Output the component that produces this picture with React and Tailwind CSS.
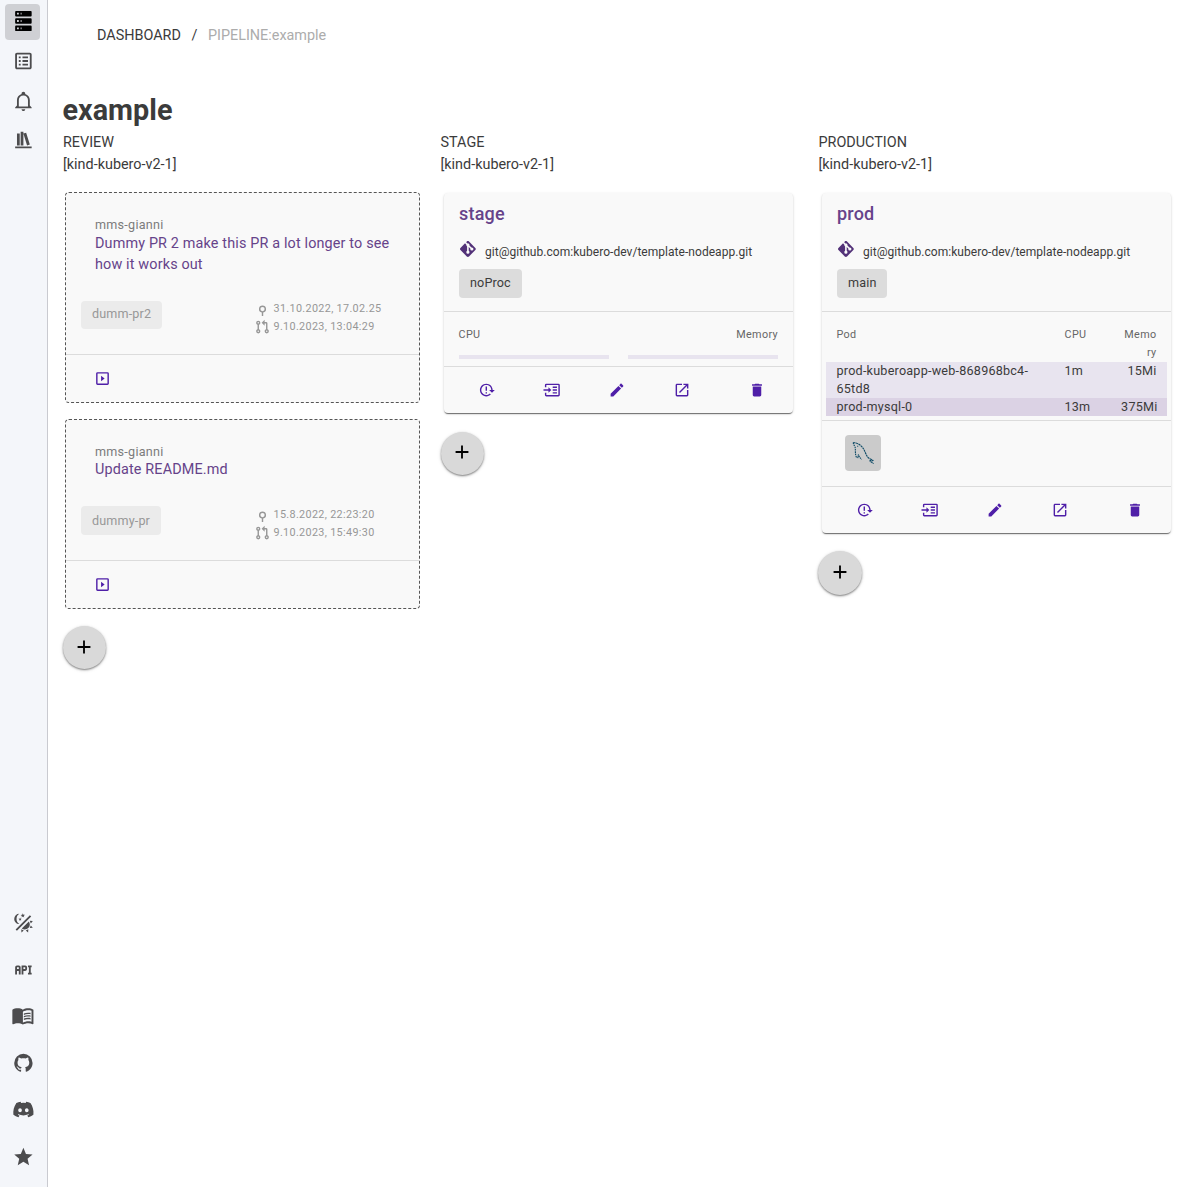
import React from "react";
import { MdMenuBook } from "react-icons/md";
import { FaDiscord } from "react-icons/fa";

const paths = {
  server:
    "M4,1H20A1,1 0 0,1 21,2V6A1,1 0 0,1 20,7H4A1,1 0 0,1 3,6V2A1,1 0 0,1 4,1M4,9H20A1,1 0 0,1 21,10V14A1,1 0 0,1 20,15H4A1,1 0 0,1 3,14V10A1,1 0 0,1 4,9M4,17H20A1,1 0 0,1 21,18V22A1,1 0 0,1 20,23H4A1,1 0 0,1 3,22V18A1,1 0 0,1 4,17M9,5H10V3H9V5M9,13H10V11H9V13M9,21H10V19H9V21M5,3V5H7V3H5M5,11V13H7V11H5M5,19V21H7V19H5Z",
  list: "M11 15H17V17H11V15M9 7H7V9H9V7M11 13H17V11H11V13M11 9H17V7H11V9M9 11H7V13H9V11M21 5V19C21 20.1 20.1 21 19 21H5C3.9 21 3 20.1 3 19V5C3 3.9 3.9 3 5 3H19C20.1 3 21 3.9 21 5M19 5H5V19H19V5M9 15H7V17H9V15Z",
  bell: "M10 21H14C14 22.1 13.1 23 12 23S10 22.1 10 21M21 19V20H3V19L5 17V11C5 7.9 7 5.2 10 4.3V4C10 2.9 10.9 2 12 2S14 2.9 14 4V4.3C17 5.2 19 7.9 19 11V17L21 19M17 11C17 8.2 14.8 6 12 6S7 8.2 7 11V18H17V11Z",
  shelf: "M9 3V18H12V3H9M12 5L16 18L19 17L15 4L12 5M5 5V18H8V5H5M3 19V21H21V19H3Z",
  theme:
    "M7.5,2C5.71,3.15 4.5,5.18 4.5,7.5C4.5,9.82 5.71,11.85 7.53,13C4.46,13 2,10.54 2,7.5A5.5,5.5 0 0,1 7.5,2M19.07,3.5L20.5,4.93L4.93,20.5L3.5,19.07L19.07,3.5M12.89,5.93L11.41,5L9.97,6L10.39,4.3L9,3.24L10.75,3.12L11.33,1.47L12,3.1L13.73,3.13L12.38,4.26L12.89,5.93M9.59,9.54L8.43,8.81L7.31,9.59L7.65,8.27L6.56,7.44L7.92,7.35L8.37,6.06L8.88,7.33L10.24,7.36L9.19,8.23L9.59,9.54M19,13.5A5.5,5.5 0 0,1 13.5,19C12.28,19 11.15,18.6 10.24,17.93L17.93,10.24C18.6,11.15 19,12.28 19,13.5M14.6,20.08L17.37,18.93L17.13,22.28L14.6,20.08M18.93,17.38L20.08,14.61L22.28,17.15L18.93,17.38M20.08,12.42L18.94,9.64L22.28,9.88L20.08,12.42M9.63,18.93L12.4,20.08L9.87,22.27L9.63,18.93Z",
  api: "M7 7H5A2 2 0 0 0 3 9V17H5V13H7V17H9V9A2 2 0 0 0 7 7M7 11H5V9H7M14 7H10V17H12V13H14A2 2 0 0 0 16 11V9A2 2 0 0 0 14 7M14 11H12V9H14M20 9V15H21V17H17V15H18V9H17V7H21V9Z",
  github:
    "M12,2A10,10 0 0,0 2,12C2,16.42 4.87,20.17 8.84,21.5C9.34,21.58 9.5,21.27 9.5,21C9.5,20.77 9.5,20.14 9.5,19.31C6.73,19.91 6.14,17.97 6.14,17.97C5.68,16.81 5.03,16.5 5.03,16.5C4.12,15.88 5.1,15.9 5.1,15.9C6.1,15.97 6.63,16.93 6.63,16.93C7.5,18.45 8.97,18 9.54,17.76C9.63,17.11 9.89,16.67 10.17,16.42C7.95,16.17 5.62,15.31 5.62,11.5C5.62,10.39 6,9.5 6.65,8.79C6.55,8.54 6.2,7.5 6.75,6.15C6.75,6.15 7.59,5.88 9.5,7.17C10.29,6.95 11.15,6.84 12,6.84C12.85,6.84 13.71,6.95 14.5,7.17C16.41,5.88 17.25,6.15 17.25,6.15C17.8,7.5 17.45,8.54 17.35,8.79C18,9.5 18.38,10.39 18.38,11.5C18.38,15.32 16.04,16.16 13.81,16.41C14.17,16.72 14.5,17.33 14.5,18.26C14.5,19.6 14.5,20.68 14.5,21C14.5,21.27 14.66,21.59 15.17,21.5C19.14,20.16 22,16.42 22,12A10,10 0 0,0 12,2Z",
  star: "M12,17.27L18.18,21L16.54,13.97L22,9.24L14.81,8.62L12,2L9.19,8.62L2,9.24L7.45,13.97L5.82,21L12,17.27Z",
  plus: "M19,13H13V19H11V13H5V11H11V5H13V11H19V13Z",
  git: "M2.6,10.59L8.38,4.8L10.07,6.5C9.83,7.35 10.22,8.28 11,8.73V14.27C10.4,14.61 10,15.26 10,16A2,2 0 0,0 12,18A2,2 0 0,0 14,16C14,15.26 13.6,14.61 13,14.27V9.41L15.07,11.5C15,11.65 15,11.82 15,12A2,2 0 0,0 17,14A2,2 0 0,0 19,12A2,2 0 0,0 17,10C16.82,10 16.65,10 16.5,10.07L13.93,7.5C14.19,6.57 13.71,5.55 12.78,5.16C12.35,5 11.9,4.96 11.5,5.07L9.8,3.38L10.59,2.6C11.37,1.81 12.63,1.81 13.41,2.6L21.4,10.59C22.19,11.37 22.19,12.63 21.4,13.41L13.41,21.4C12.63,22.19 11.37,22.19 10.59,21.4L2.6,13.41C1.81,12.63 1.81,11.37 2.6,10.59Z",
  playBox: "M19,19H5V5H19M19,3H5A2,2 0 0,0 3,5V19A2,2 0 0,0 5,21H19A2,2 0 0,0 21,19V5A2,2 0 0,0 19,3M10,8V16L15,12",
  commit: "M12 7A5 5 0 0 0 11 16.9V22H13V16.9A5 5 0 0 0 12 7M12 9A3 3 0 1 1 12 15A3 3 0 1 1 12 9Z",
  pull: "M6,3A3,3 0 0,1 9,6C9,7.31 8.17,8.42 7,8.83V15.17C8.17,15.58 9,16.69 9,18A3,3 0 0,1 6,21A3,3 0 0,1 3,18C3,16.69 3.83,15.58 5,15.17V8.83C3.83,8.42 3,7.31 3,6A3,3 0 0,1 6,3M6,5A1,1 0 0,0 5,6A1,1 0 0,0 6,7A1,1 0 0,0 7,6A1,1 0 0,0 6,5M6,17A1,1 0 0,0 5,18A1,1 0 0,0 6,19A1,1 0 0,0 7,18A1,1 0 0,0 6,17M21,18A3,3 0 0,1 18,21A3,3 0 0,1 15,18C15,16.69 15.83,15.58 17,15.17V7H15V10.25L10.75,6L15,1.75V5H17A2,2 0 0,1 19,7V15.17C20.17,15.58 21,16.69 21,18M18,17A1,1 0 0,0 17,18A1,1 0 0,0 18,19A1,1 0 0,0 19,18A1,1 0 0,0 18,17Z",
  reload:
    "M2 12C2 16.97 6.03 21 11 21C13.39 21 15.68 20.06 17.4 18.4L15.9 16.9C14.63 18.25 12.86 19 11 19C4.76 19 1.64 11.46 6.05 7.05C10.46 2.64 18 5.77 18 12H15L19 16H19.1L23 12H20C20 7.03 15.97 3 11 3C6.03 3 2 7.03 2 12M10 15H12V17H10V15M10 7H12V13H10V7",
  enter:
    "M4 3H21A2 2 0 0 1 23 5V19A2 2 0 0 1 21 21H4A2 2 0 0 1 2 19V16H4V19H21V5H4V8H2V5A2 2 0 0 1 4 3M0 11H7V8L11 12L7 16V13H0V11M13 7H19V9H13V7M13 11H19V13H13V11M13 15H19V17H13V15Z",
  pencil:
    "M20.71,7.04C21.1,6.65 21.1,6 20.71,5.63L18.37,3.29C18,2.9 17.35,2.9 16.96,3.29L15.12,5.12L18.87,8.87M3,17.25V21H6.75L17.81,9.93L14.06,6.18L3,17.25Z",
  open: "M14,3V5H17.59L7.76,14.83L9.17,16.24L19,6.41V10H21V3M19,19H5V5H12V3H5C3.89,3 3,3.9 3,5V19A2,2 0 0,0 5,21H19A2,2 0 0,0 21,19V12H19V19Z",
  trash: "M19,4H15.5L14.5,3H9.5L8.5,4H5V6H19M6,19A2,2 0 0,0 8,21H16A2,2 0 0,0 18,19V7H6V19Z",
};

function Icon({ name, className = "size-[22px]" }) {
  return (
    <svg viewBox="0 0 24 24" className={`shrink-0 overflow-visible fill-current ${className}`}>
      <path fillRule="evenodd" d={paths[name]} />
    </svg>
  );
}

function Sidebar() {
  return (
    <nav className="flex h-[1187px] w-12 shrink-0 flex-col items-center border-r border-[#c9cad0] bg-[#f4f6fa] text-[#4c4c4e] [&_svg]:-translate-x-[0.6px]">
      <div className="mt-1 mr-0.5 flex h-9 w-[35px] items-center justify-center rounded bg-[#cfd0d4] pb-0.5 pl-[2px] text-black">
        <Icon name="server" />
      </div>
      <Icon name="list" className="mt-[10px] size-[22px]" />
      <Icon name="bell" className="mt-[18px] size-[22px]" />
      <Icon name="shelf" className="mt-[17px] size-[22px]" />
      <div className="mt-auto flex flex-col items-center">
        <Icon name="theme" />
        <Icon name="api" className="mt-[25px] size-[22px]" />
        <MdMenuBook className="mt-[23px] size-[23px]" />
        <Icon name="github" className="mt-[25px] size-[22px]" />
        <FaDiscord className="mt-6 h-[23px] w-[22px]" />
        <Icon name="star" className="mt-[25px] mb-[19px] size-[22px]" />
      </div>
    </nav>
  );
}

function AddButton({ className }) {
  return (
    <button
      className={`flex items-center justify-center rounded-full bg-[#d9d9d9] text-black shadow-[0_1px_2px_rgba(0,0,0,0.45),0_1px_4px_rgba(0,0,0,0.12)] ${className}`}
    >
      <Icon name="plus" />
    </button>
  );
}

function ColumnHead({ title }) {
  return (
    <div className="h-[60px] text-[14.4px] leading-[22px]">
      <div>{title}</div>
      <div>[kind-kubero-v2-1]</div>
    </div>
  );
}

function ReviewCard({ title, branch, commit, pull, className, titleClass, chipClass, timesClass }) {
  return (
    <article className={`ml-0.5 flex w-[355px] flex-col rounded border border-dashed border-[#555] bg-[#f9f9f9] ${className}`}>
      <div className="pt-[23px] pr-5 pl-[29px]">
        <div className="text-[12.6px] leading-[18px] tracking-[0.26px] text-[#7c7c7c]">mms-gianni</div>
        <div className={`text-[14.4px] leading-[21px] tracking-[0.15px] text-[#66438a] ${titleClass}`}>{title}</div>
      </div>
      <div className="mt-auto mb-[25px] flex items-start pl-[15px]">
        <div className={`flex items-center rounded bg-[#ebebeb] px-[11px] text-[12.6px] tracking-[0.14px] text-[#989898] ${chipClass}`}>
          {branch}
        </div>
        <div className={`mr-[37.5px] ml-auto w-32 text-[10.8px] leading-[18px] tracking-[0.34px] text-[#979797] [&_svg]:-translate-y-[0.5px] ${timesClass}`}>
          <div className="flex h-[18px] items-center gap-[3px] whitespace-nowrap">
            <Icon name="commit" className="size-[17px]" />
            {commit}
          </div>
          <div className="-mb-2 flex h-[18px] items-center gap-[3px] whitespace-nowrap">
            <Icon name="pull" className="size-[17px]" />
            {pull}
          </div>
        </div>
      </div>
      <div className="flex h-12 items-center border-t border-[#dcdcdc] pl-7 text-[#4f1fa8]">
        <Icon name="playBox" className="size-[17px]" />
      </div>
    </article>
  );
}

function CardTop({ name, branch }) {
  return (
    <div className="h-[118px] px-[15px] pt-[9px]">
      <h2 className="text-[18px] leading-6 font-medium tracking-[0.22px] text-[#66438a]">{name}</h2>
      <div className="mt-[13px] flex h-[26px] text-[12px]">
        <Icon name="git" className="-ml-px size-[19px] translate-x-[0.4px] translate-y-[0.5px] text-[#523178]" />
        <span className="ml-2 pt-1 leading-[18px] tracking-[0.04px] whitespace-nowrap">
          git@github.com:kubero-dev/template-nodeapp.git
        </span>
      </div>
      <div className="mt-1 flex">
        <span className="flex h-[29px] items-center rounded bg-[#dcdcdc] px-[11px] pb-px text-[12.6px] tracking-[0.14px]">{branch}</span>
      </div>
    </div>
  );
}

function Actions() {
  return (
    <div className="flex h-[47px] items-center border-t border-[#dcdcdc] pl-[34px] text-[#4f1fa8] [&_svg]:translate-x-[0.5px] [&_svg]:-translate-y-[0.5px]">
      <Icon name="reload" className="mr-12 size-[17px]" />
      <Icon name="enter" className="mr-12 size-[17px]" />
      <Icon name="pencil" className="mr-12 size-[17px]" />
      <Icon name="open" className="mr-[58px] size-[17px]" />
      <Icon name="trash" className="size-[17px]" />
    </div>
  );
}

const cardClass =
  "ml-[3.5px] mt-px w-[349px] rounded bg-[#f9f9f9] shadow-[0_2px_1px_-1px_rgba(0,0,0,0.4),0_1px_1px_rgba(0,0,0,0.2),0_1px_3px_rgba(0,0,0,0.14)]";

function Meter({ label, className }) {
  return (
    <div className={className}>
      <div className="text-[10.8px] leading-[18px] tracking-[0.36px] text-[#666]">{label}</div>
      <div className="mt-[11px] h-1 bg-[#e8e4ef]" />
    </div>
  );
}

function PodRow({ pod, cpu, memory, className }) {
  return (
    <div className={`mx-1 grid grid-cols-[228px_56px_36px] pl-[10.5px] ${className}`}>
      <div className="pr-6">{pod}</div>
      <div>{cpu}</div>
      <div className="text-right">{memory}</div>
    </div>
  );
}

function MysqlMark() {
  return (
    <svg viewBox="0 0 36 36" className="size-9 fill-none stroke-[#0d4a66]" strokeWidth="1.1" strokeLinecap="butt">
      <path d="M8.3 7.5C12 7.8 16 10 18.3 13.5C20 16 20.7 19.5 23 22.5C24.5 23.8 27 24.4 28 25.6C26.8 26.3 25 25 24.8 25.8C25.4 27 27.4 27 28.5 28.8" strokeDasharray="2.2 0.5" />
      <path d="M8.3 7.5C8.2 9.5 9.6 10.5 10.2 12.5C10.6 15.5 10 19 11.3 22L12.8 22.5L13.4 19.5C14 22 15.2 22.6 16.6 24.5" strokeDasharray="1.6 0.7" />
      <path d="M12.2 11.2h1" />
    </svg>
  );
}

export default function App() {
  return (
    <div className="flex h-[1187px] overflow-hidden bg-white font-[Roboto,sans-serif] text-[#3b3b3b]">
      <Sidebar />
      <main className="flex-1 pl-[15px]">
        <div className="flex h-[70px] items-center pt-0.5 pl-[34px] text-[14.4px]">
          <span>DASHBOARD</span>
          <span className="w-[27px] text-center">/</span>
          <span className="text-[#acacac]">PIPELINE:example</span>
        </div>
        <h1 className="mt-[21px] mb-0.5 -ml-[0.5px] text-[28.8px] leading-[39px] font-bold">example</h1>
        <div className="grid grid-cols-[377.5px_378px_366px]">
          <section>
            <ColumnHead title="REVIEW" />
            <ReviewCard
              className="h-[211px]"
              titleClass="-mt-px"
              chipClass="h-7 pb-0.5"
              timesClass="-mt-px"
              title="Dummy PR 2 make this PR a lot longer to see how it works out"
              branch="dumm-pr2"
              commit="31.10.2022, 17.02.25"
              pull="9.10.2023, 13:04:29"
            />
            <ReviewCard
              className="mt-4 h-[190px]"
              titleClass="-mt-0.5"
              chipClass="h-[29px] pt-px"
              timesClass=""
              title="Update README.md"
              branch="dummy-pr"
              commit="15.8.2022, 22:23:20"
              pull="9.10.2023, 15:49:30"
            />
            <AddButton className="mt-[17px] size-[43px] pr-px pb-0.5" />
          </section>
          <section>
            <ColumnHead title="STAGE" />
            <article className={cardClass}>
              <CardTop name="stage" branch="noProc" />
              <div className="flex h-[55px] justify-between border-t border-[#dcdcdc] px-[15px] pt-3.5">
                <Meter label="CPU" className="-ml-[0.5px] w-[150px]" />
                <Meter label="Memory" className="w-[150px] text-right" />
              </div>
              <Actions />
            </article>
            <AddButton className="mt-[19px] size-[43px] pr-px pb-[3px]" />
          </section>
          <section>
            <ColumnHead title="PRODUCTION" />
            <article className={cardClass}>
              <CardTop name="prod" branch="main" />
              <div className="h-[109px] border-t border-[#dcdcdc] pt-3.5 text-[12.6px] leading-[18px] tracking-[0.22px]">
                <PodRow
                  pod="Pod"
                  cpu="CPU"
                  memory="Memory"
                  className="text-[10.8px] tracking-[0.36px] text-[#666] [&>:last-child]:pl-[3px] [&>:last-child]:break-all"
                />
                <PodRow pod="prod-kuberoapp-web-868968bc4-65td8" cpu="1m" memory="15Mi" className="bg-[#e8e4ef]" />
                <PodRow pod="prod-mysql-0" cpu="13m" memory="375Mi" className="bg-[#dbd2e4] [&>:last-child]:-mr-px" />
              </div>
              <div className="h-[66px] border-t border-[#dcdcdc] pt-3.5 pl-[23px]">
                <div className="size-9 rounded bg-[#cbcbcb]">
                  <MysqlMark />
                </div>
              </div>
              <Actions />
            </article>
            <AddButton className="-ml-px mt-[18px] size-11 pb-0.5" />
          </section>
        </div>
      </main>
    </div>
  );
}
